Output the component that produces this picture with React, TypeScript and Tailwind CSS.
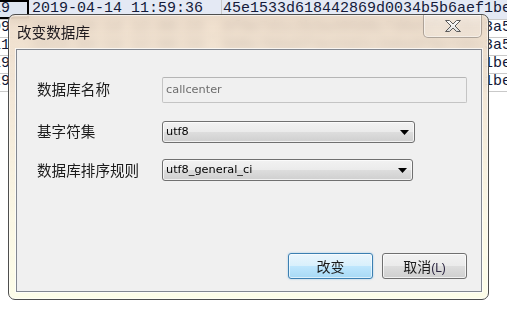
const rows = [
  { id: "119", time: "2019-04-14 11:59:36", hash: "45e1533d618442869d0034b5b6aef1be" },
  { id: "209", time: "2019-04-14 12:00:23", hash: "6f0e7d1c2b3a49588c7d6e5f4a3b23a5" },
  { id: "211", time: "2019-04-14 12:00:23", hash: "9d8c7b6a5f4e43d2c1b0a9f8e7d6c3a5" },
  { id: "219", time: "2019-04-14 12:01:05", hash: "7e2a9c4b1d8f40e6a3c5b7d9f1e2a1be" },
  { id: "229", time: "2019-04-14 12:01:47", hash: "2c4e6a8b0d1f43a5c7e9b2d4f6a8c1be" },
];

const cjk = "font-['Microsoft_YaHei','Noto_Sans_CJK_SC',sans-serif]";
const ui = "font-['Tahoma','DejaVu_Sans',sans-serif]";

const Combo = ({ value, width }: { value: string; width: string }) => {
  return (
    <div
      className={`${width} h-[22px] flex items-center justify-between pl-[3px] pr-[5px] rounded-[3px] border border-[#707070] shadow-[inset_0_0_0_1px_rgba(255,255,255,0.7)] bg-[linear-gradient(to_bottom,#f2f2f2_0%,#ebebeb_48%,#dddddd_52%,#cfcfcf_100%)]`}
    >
      <span className={`${ui} text-[11.3px] text-black`}>{value}</span>
      <svg width="9" height="5" viewBox="0 0 9 5">
        <path d="M0 0 H9 L4.5 5 Z" fill="#000" />
      </svg>
    </div>
  );
};

const App = () => {
  return (
    <div className="relative w-[507px] h-[313px] overflow-hidden bg-white">
      {/* grid behind the dialog */}
      <div className="-ml-[20px] w-[560px] font-['Courier_New','Liberation_Mono',monospace] text-[15px] text-[#141a3a]">
        {rows.map((r, i) => (
          <div
            key={r.hash}
            className={`flex border-b border-[#c9c9c9] ${i === 0 ? "h-[20px] bg-[#e4e9f4]" : "h-[18px]"}`}
          >
            <div
              className={`w-[49px] pl-[3px] flex items-center whitespace-nowrap overflow-hidden ${i === 0 ? "ring-2 ring-inset ring-black bg-[#dfe6f1]" : "border-r border-[#c9c9c9]"}`}
            >
              {r.id}
            </div>
            <div className="w-[193px] pl-[3px] flex items-center whitespace-nowrap border-r border-[#c9c9c9]">
              {r.time}
            </div>
            <div className="flex-1 pl-[1px] flex items-center whitespace-nowrap">{r.hash}</div>
          </div>
        ))}
      </div>

      {/* dialog */}
      <div className="absolute left-[8px] top-[14px] w-[481px] h-[286px] flex flex-col rounded-[7px] border border-[#4e4e4e] backdrop-blur-[4px] shadow-[inset_0_0_0_1px_rgba(255,255,255,0.55)] bg-[linear-gradient(to_bottom,rgba(236,216,194,0.82)_0%,rgba(240,226,208,0.88)_25%,rgba(250,246,226,0.95)_70%,rgba(253,253,232,0.97)_100%)]">
        <div className="h-[34px] flex items-start justify-between pl-[8px] pr-[6px]">
          <span className={`${cjk} text-[14.6px] leading-[34px] text-[#1e1a1e]`}>改变数据库</span>
          <div className="w-[59px] h-[23px] flex items-center justify-center rounded-b-[5px] border border-t-0 border-[rgba(120,110,100,0.55)] shadow-[inset_0_0_0_1px_rgba(255,255,255,0.45)] bg-[linear-gradient(to_bottom,rgba(255,255,255,0.35),rgba(255,255,255,0.15))]">
            <svg width="18" height="14" viewBox="0 0 18 14">
              <defs>
                <linearGradient id="xg" x1="0" y1="0" x2="0" y2="1">
                  <stop offset="0" stopColor="#ffffff" />
                  <stop offset="1" stopColor="#dcdcdc" />
                </linearGradient>
              </defs>
              <path
                d="M1.5 1.5 H5.5 L9 5 L12.5 1.5 H16.5 L11 7 L16.5 12.5 H12.5 L9 9 L5.5 12.5 H1.5 L7 7 Z"
                fill="url(#xg)"
                stroke="#5a5a5a"
                strokeWidth="1"
                strokeLinejoin="round"
              />
            </svg>
          </div>
        </div>

        <div className="flex-1 ml-[7px] mr-[6px] mb-[7px] flex flex-col border border-[#828790] bg-[#f0f0f0] shadow-[0_0_0_1px_rgba(255,255,255,0.7)] pt-[27px] pl-[20px] pr-[14px] pb-[12px]">
          <div className="flex items-center">
            <span className={`${cjk} w-[125px] text-[14.6px] text-[#1b1b1b] -mt-[2px]`}>数据库名称</span>
            <div className="w-[305px] h-[26px] flex items-center pl-[3px] rounded-[2px] border border-[#c4c4c4] border-t-[#b5b5b5] bg-[#f0f0f0]">
              <span className={`${ui} text-[11.3px] text-[#6d6d6d]`}>callcenter</span>
            </div>
          </div>

          <div className="flex items-center mt-[18px]">
            <span className={`${cjk} w-[125px] text-[14.6px] text-[#1b1b1b] -mt-[2px]`}>基字符集</span>
            <Combo value="utf8" width="w-[253px]" />
          </div>

          <div className="flex items-center mt-[16px]">
            <span className={`${cjk} w-[125px] text-[14.6px] text-[#1b1b1b] -mt-[1px]`}>数据库排序规则</span>
            <Combo value="utf8_general_ci" width="w-[251px]" />
          </div>

          <div className="mt-auto flex justify-end gap-[9px]">
            <button className="w-[85px] h-[26px] flex items-center justify-center rounded-[3px] border border-[#3c7fb1] shadow-[inset_0_0_0_1px_rgba(255,255,255,0.6),0_0_2px_rgba(90,170,230,0.6)] bg-[linear-gradient(to_bottom,#eaf6fd_0%,#d9f0fc_48%,#bee6fd_52%,#a7d9f5_100%)]">
              <span className={`${cjk} text-[14px] text-[#1b1b1b]`}>改变</span>
            </button>
            <button className="w-[85px] h-[26px] flex items-center justify-center rounded-[3px] border border-[#707070] shadow-[inset_0_0_0_1px_rgba(255,255,255,0.7)] bg-[linear-gradient(to_bottom,#f2f2f2_0%,#ebebeb_48%,#dddddd_52%,#cfcfcf_100%)]">
              <span className={`${cjk} text-[14px] text-[#1b1b1b]`}>
                取消<span className="font-['Liberation_Sans',sans-serif] text-[12px] text-[#2a2440]">(L)</span>
              </span>
            </button>
          </div>
        </div>
      </div>
    </div>
  );
};

export default App;
